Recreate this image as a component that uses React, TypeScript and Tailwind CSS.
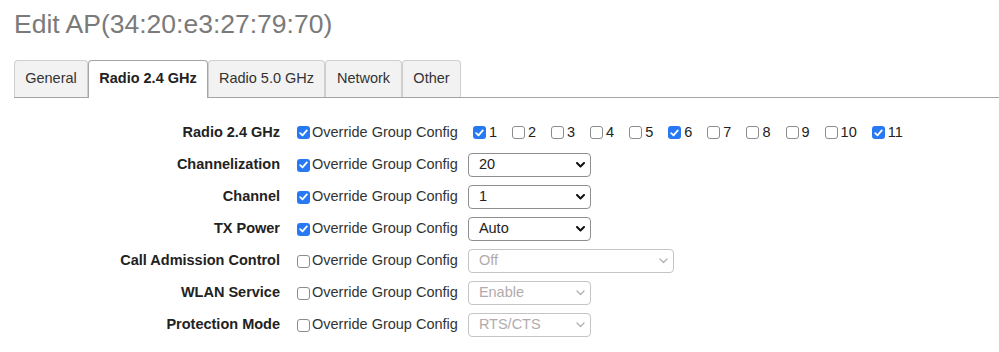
import React from 'react';

const tabs = [
  { label: 'General', w: 'w-[74px]' },
  { label: 'Radio 2.4 GHz', w: 'w-[120px]' },
  { label: 'Radio 5.0 GHz', w: 'w-[117px]' },
  { label: 'Network', w: 'w-[77px]' },
  { label: 'Other', w: 'w-[59px]' },
];

const channels = [
  { n: 1, on: true },
  { n: 2, on: false },
  { n: 3, on: false },
  { n: 4, on: false },
  { n: 5, on: false },
  { n: 6, on: true },
  { n: 7, on: false },
  { n: 8, on: false },
  { n: 9, on: false },
  { n: 10, on: false },
  { n: 11, on: true },
];

const Check = ({ on }: { on: boolean }) =>
  on ? (
    <span className="w-[13px] h-[13px] rounded-[3px] bg-[#2778f5] flex items-center justify-center shrink-0">
      <svg width="9" height="8" viewBox="0 0 9 8" fill="none">
        <path d="M1.2 4.2 L3.5 6.4 L7.8 1.4" stroke="white" strokeWidth="1.8" strokeLinecap="round" strokeLinejoin="round" />
      </svg>
    </span>
  ) : (
    <span className="w-[13px] h-[13px] rounded-[3px] bg-white border border-[#8c8c8c] shrink-0" />
  );

const Chevron = ({ disabled }: { disabled?: boolean }) => (
  <svg width="9" height="6" viewBox="0 0 9 6" fill="none">
    <path
      d="M1 1 L4.5 4.5 L8 1"
      stroke={disabled ? '#b0b0b0' : '#111'}
      strokeWidth={disabled ? 1.3 : 2}
      strokeLinecap="round"
      strokeLinejoin="round"
    />
  </svg>
);

const Select = ({ value, width, disabled }: { value: string; width: string; disabled?: boolean }) => (
  <div
    className={`${width} h-[24px] rounded-[4px] border flex items-center justify-between pl-[10px] pr-[5px] bg-white ${
      disabled ? 'border-[#c4c4c4] text-[#b3abab]' : 'border-[#8e8e8e] text-[#222]'
    }`}
  >
    <span>{value}</span>
    <Chevron disabled={disabled} />
  </div>
);

const rows: { label: string; on: boolean; control: React.ReactNode }[] = [
  {
    label: 'Radio 2.4 GHz',
    on: true,
    control: (
      <div className="flex items-center h-[25px] pl-[5px]">
        {channels.map((c) => (
          <div key={c.n} className="flex items-center mr-[15px]">
            <Check on={c.on} />
            <span className="ml-[3px] text-[#222]">{c.n}</span>
          </div>
        ))}
      </div>
    ),
  },
  { label: 'Channelization', on: true, control: <Select value="20" width="w-[123px]" /> },
  { label: 'Channel', on: true, control: <Select value="1" width="w-[123px]" /> },
  { label: 'TX Power', on: true, control: <Select value="Auto" width="w-[123px]" /> },
  { label: 'Call Admission Control', on: false, control: <Select value="Off" width="w-[206px]" disabled /> },
  { label: 'WLAN Service', on: false, control: <Select value="Enable" width="w-[123px]" disabled /> },
  { label: 'Protection Mode', on: false, control: <Select value="RTS/CTS" width="w-[123px]" disabled /> },
];

export default function App() {
  return (
    <div className="w-[999px] h-[352px] bg-white overflow-hidden font-['Liberation_Sans',Arial,sans-serif] text-[14.5px]">
      <h1 className="pl-[14px] pt-[8px] text-[26.5px] leading-[32px] text-[#7a7a7a] font-normal">
        Edit AP(34:20:e3:27:79:70)
      </h1>

      {/* Tabs */}
      <div className="mt-[20px] ml-[14px] flex items-end border-b border-[#a4a4a4] h-[38px]">
        {tabs.map((t) => {
          const active = t.label === 'Radio 2.4 GHz';
          return (
            <div
              key={t.label}
              className={`${t.w} rounded-t-[4px] border border-b-0 flex items-center justify-center ${
                active
                  ? 'h-[38px] mb-[-1px] bg-white border-[#a4a4a4] font-bold text-[#222] pb-px'
                  : 'h-[37px] bg-[#f2f2f2] border-[#cfcfcf] text-[#333]'
              }`}
            >
              {t.label}
            </div>
          );
        })}
      </div>

      {/* Form */}
      <div className="mt-[22px] grid grid-cols-[280px_auto_1fr] gap-x-[10px] gap-y-[8px] items-center">
        {rows.map((r) => (
          <React.Fragment key={r.label}>
            <div className="text-right font-bold text-[#222]">{r.label}</div>
            <div className="flex items-center pl-[7px]">
              <Check on={r.on} />
              <span className="ml-[2px] text-[#333]">Override Group Config</span>
            </div>
            <div>{r.control}</div>
          </React.Fragment>
        ))}
      </div>
    </div>
  );
}
